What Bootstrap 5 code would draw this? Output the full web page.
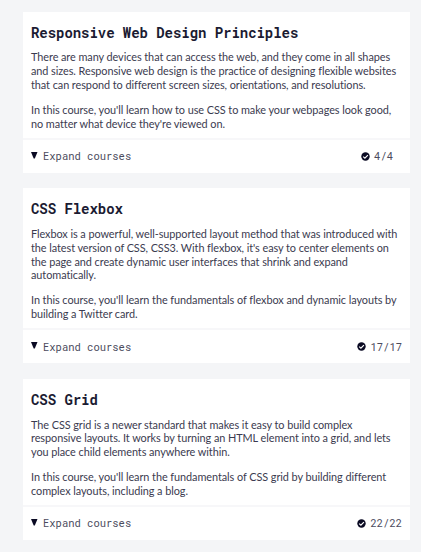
<!DOCTYPE html>
<html lang="en">
<head>
<meta charset="utf-8">
<meta name="viewport" content="width=device-width, initial-scale=1">
<title>Courses</title>
<link href="https://cdn.jsdelivr.net/npm/bootstrap@5.3.0/dist/css/bootstrap.min.css" rel="stylesheet">
<style>
body{background:#f4f5f7;color:#3b3b4f;font-family:Lato,sans-serif;font-size:10.9px;line-height:13.8px;letter-spacing:-.07px;overflow:hidden}
.course-list{padding:11.6px 11px 0 23px;gap:15.7px}
.block{background:#fff;border:0;border-radius:0;color:inherit}
.block-body{padding:11px 8px 7px}
.block h2{font:700 14px/20px "Roboto Mono","DejaVu Sans Mono",monospace;letter-spacing:-.05px;color:#1b1b32;margin:0 0 7.8px}
.block p{margin:0 0 11.2px;white-space:nowrap}
.block p:last-child{margin:0}
.block-foot{border-top:2px solid #f7f7f9;height:35px;padding:0 8px;font:400 10.5px/14px "Roboto Mono","DejaVu Sans Mono",monospace;letter-spacing:0;color:#4b4b5d}
.toggle{gap:5px}
.tri{margin-top:-2px}
.tally{gap:4.5px}
.tally-short{margin-right:9px}
</style>
</head>
<body>
<main class="course-list d-flex flex-column">
  <section class="block card">
    <div class="block-body">
      <h2>Responsive Web Design Principles</h2>
      <p>There are many devices that can access the web, and they come in all shapes<br>and sizes. Responsive web design is the practice of designing flexible websites<br>that can respond to different screen sizes, orientations, and resolutions.</p>
      <p>In this course, you'll learn how to use CSS to make your webpages look good,<br>no matter what device they're viewed on.</p>
    </div>
    <div class="block-foot d-flex align-items-center justify-content-between">
      <span class="toggle d-flex align-items-center"><svg class="tri" width="7" height="7" viewBox="0 0 7 7"><path d="M0 0h6.5L3.8 6.5H2.7z" fill="#0a0a23"/></svg>Expand courses</span>
      <span class="tally tally-short d-flex align-items-center"><svg width="9" height="9" viewBox="0 0 9 9"><circle cx="4.5" cy="4.5" r="4.2" fill="#0a0a23"/><path d="M2.2 4.6 3.9 6.2 6.9 3.1" fill="none" stroke="#fff" stroke-width="1.2"/></svg>4/4</span>
    </div>
  </section>
  <section class="block card">
    <div class="block-body">
      <h2>CSS Flexbox</h2>
      <p>Flexbox is a powerful, well-supported layout method that was introduced with<br>the latest version of CSS, CSS3. With flexbox, it's easy to center elements on<br>the page and create dynamic user interfaces that shrink and expand<br>automatically.</p>
      <p>In this course, you'll learn the fundamentals of flexbox and dynamic layouts by<br>building a Twitter card.</p>
    </div>
    <div class="block-foot d-flex align-items-center justify-content-between">
      <span class="toggle d-flex align-items-center"><svg class="tri" width="7" height="7" viewBox="0 0 7 7"><path d="M0 0h6.5L3.8 6.5H2.7z" fill="#0a0a23"/></svg>Expand courses</span>
      <span class="tally d-flex align-items-center"><svg width="9" height="9" viewBox="0 0 9 9"><circle cx="4.5" cy="4.5" r="4.2" fill="#0a0a23"/><path d="M2.2 4.6 3.9 6.2 6.9 3.1" fill="none" stroke="#fff" stroke-width="1.2"/></svg>17/17</span>
    </div>
  </section>
  <section class="block card">
    <div class="block-body">
      <h2>CSS Grid</h2>
      <p>The CSS grid is a newer standard that makes it easy to build complex<br>responsive layouts. It works by turning an HTML element into a grid, and lets<br>you place child elements anywhere within.</p>
      <p>In this course, you'll learn the fundamentals of CSS grid by building different<br>complex layouts, including a blog.</p>
    </div>
    <div class="block-foot d-flex align-items-center justify-content-between">
      <span class="toggle d-flex align-items-center"><svg class="tri" width="7" height="7" viewBox="0 0 7 7"><path d="M0 0h6.5L3.8 6.5H2.7z" fill="#0a0a23"/></svg>Expand courses</span>
      <span class="tally d-flex align-items-center"><svg width="9" height="9" viewBox="0 0 9 9"><circle cx="4.5" cy="4.5" r="4.2" fill="#0a0a23"/><path d="M2.2 4.6 3.9 6.2 6.9 3.1" fill="none" stroke="#fff" stroke-width="1.2"/></svg>22/22</span>
    </div>
  </section>
</main>
<script src="https://cdn.jsdelivr.net/npm/bootstrap@5.3.0/dist/js/bootstrap.bundle.min.js"></script>
</body>
</html>
